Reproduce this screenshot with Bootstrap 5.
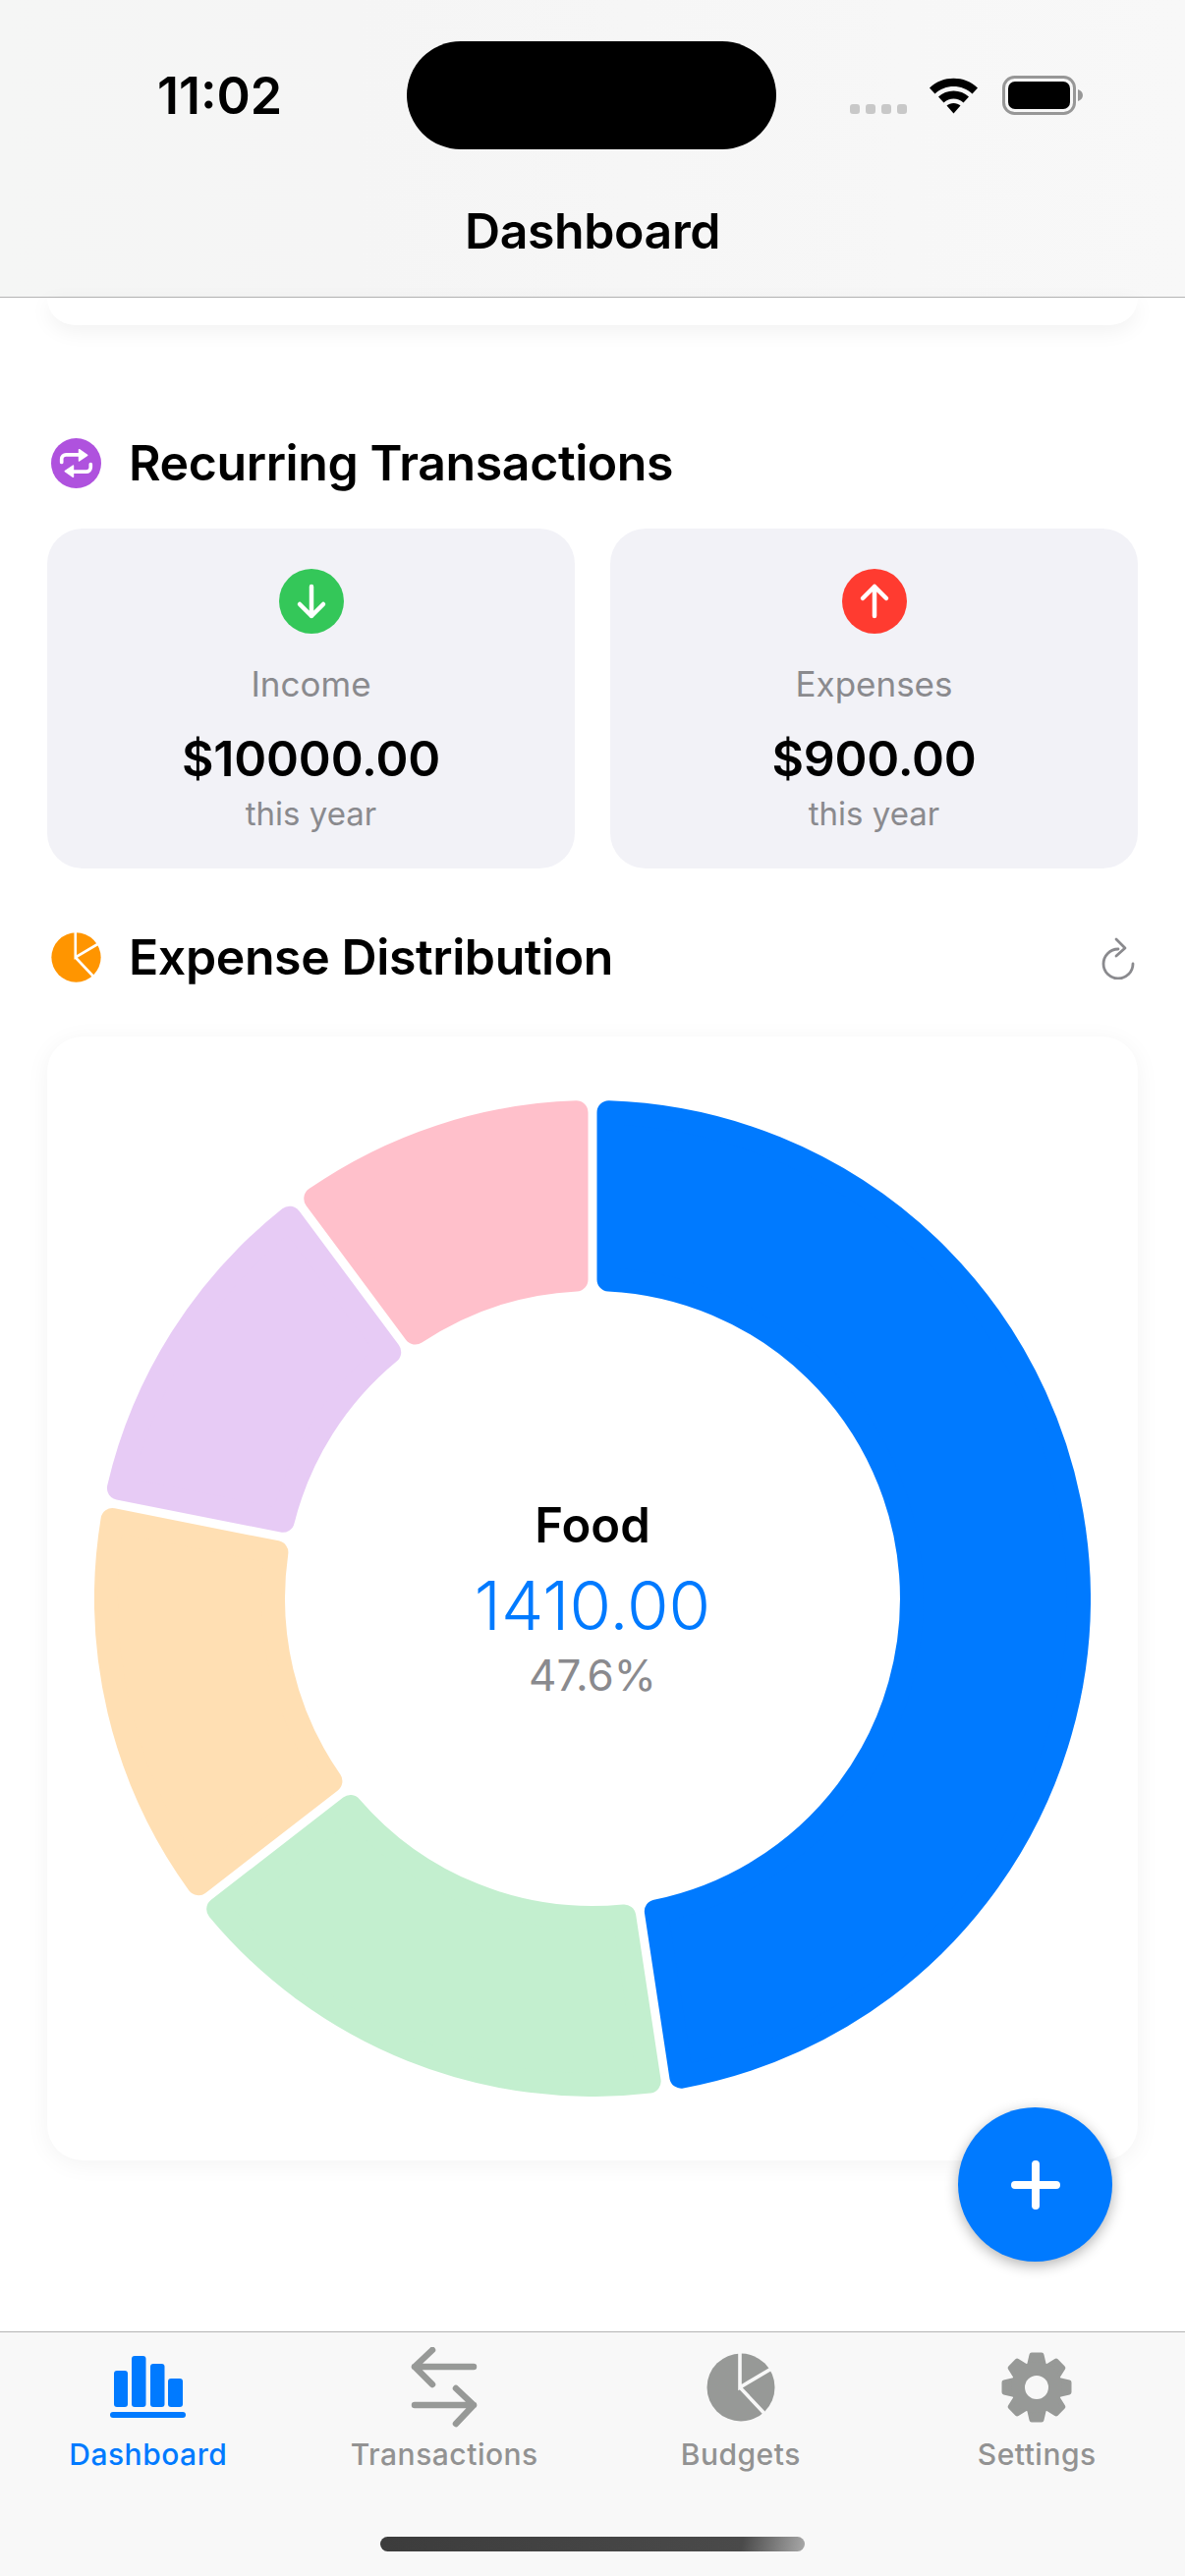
<!DOCTYPE html>
<html lang="en">
<head>
  <meta charset="UTF-8">
  <meta name="viewport" content="width=device-width, initial-scale=1.0">
  <title>Dashboard</title>
  <link href="https://cdn.jsdelivr.net/npm/bootstrap@5.3.0/dist/css/bootstrap.min.css" rel="stylesheet">
  <style>
    body {
      font-family: Inter, "Liberation Sans", sans-serif;
      background-color: #fff;
      color: #000;
    }
    .app-shell {
      width: 1206px;
      height: 2622px;
    }
    .top-bar {
      height: 303px;
      background: linear-gradient(90deg, #f5f6f5 0%, #f5f5f5 30%, #f8f8f8 100%);
      border-bottom: 1px solid #b4b4b4;
    }
    .status-row {
      padding-top: 42px;
      height: 152px;
    }
    .clock {
      width: 414px;
      padding-left: 160px;
      padding-top: 26px;
      font-size: 52px;
      line-height: 60px;
      font-weight: 600;
    }
    .island {
      width: 376px;
      height: 110px;
      background-color: #000;
      border-radius: 55px;
    }
    .status-icons {
      padding-left: 75px;
      padding-top: 36px;
    }
    .signal-dot {
      width: 10px;
      height: 10px;
      border-radius: 3px;
      background-color: #c8c8c8;
    }
    .signal-dots {
      gap: 6px;
      margin-top: 28px;
      margin-right: 22px;
    }
    .page-title {
      margin: 0;
      padding-top: 53px;
      font-size: 50px;
      line-height: 60px;
      font-weight: 600;
      letter-spacing: -.4px;
    }
    .content-area {
      padding: 0 48px;
    }
    .card-stub {
      height: 28px;
      background-color: #fff;
      border-radius: 0 0 34px 34px;
      box-shadow: 0 6px 22px rgba(0, 0, 0, .06);
    }
    .section-head {
      height: 51px;
      padding-left: 4px;
    }
    .section-one { margin-top: 115px; }
    .section-two { margin-top: 65px; }
    .section-head h2 {
      margin: 0 0 0 28px;
      font-size: 50px;
      line-height: 51px;
      font-weight: 600;
      letter-spacing: -.4px;
    }
    .refresh-icon {
      margin-right: 2px;
    }
    .tile-row {
      margin-top: 41px;
      gap: 36px;
    }
    .stat-tile {
      width: 537px;
      height: 346px;
      padding-top: 41px;
      background-color: #f2f2f7;
      border-radius: 36px;
    }
    .tile-label {
      margin-top: 30px;
      font-size: 35px;
      line-height: 42px;
      color: #8a8a8e;
    }
    .tile-amount {
      margin-top: 25px;
      font-size: 50px;
      line-height: 60px;
      font-weight: 600;
      letter-spacing: -.2px;
    }
    .tile-note {
      margin-top: 6px;
      font-size: 33px;
      line-height: 40px;
      color: #8a8a8e;
    }
    .chart-card {
      margin-top: 55px;
      height: 1144px;
      background-color: #fff;
      border-radius: 36px;
      box-shadow: 0 4px 24px rgba(0, 0, 0, .05);
    }
    .chart-label {
      padding-top: 3px;
    }
    .chart-name {
      font-size: 49px;
      line-height: 56px;
      font-weight: 600;
    }
    .chart-value {
      margin-top: 15px;
      font-size: 69px;
      line-height: 76px;
      color: #007aff;
      font-weight: 300;
    }
    .chart-share {
      margin-top: 6px;
      font-size: 44px;
      line-height: 54px;
      color: #8a8a8e;
    }
    .add-fab {
      right: 74px;
      bottom: 71px;
      width: 157px;
      height: 157px;
      background-color: #007aff;
      box-shadow: 0 4px 14px rgba(0, 0, 0, .3);
    }
    .tab-bar {
      height: 249px;
      background-color: #f8f8f8;
      border-top: 1px solid #b4b4b4;
    }
    .tab-item {
      width: 301.5px;
      color: #929292;
    }
    .tab-item.is-active {
      color: #007aff;
    }
    .tab-icon {
      height: 84px;
      margin-top: 14px;
    }
    .tab-label {
      margin-top: 4px;
      font-size: 30px;
      line-height: 44px;
      font-weight: 500;
      letter-spacing: .5px;
    }
    .home-bar {
      width: 432px;
      height: 15px;
      margin: 62px auto 0;
      border-radius: 8px;
      background: linear-gradient(100deg, #3c3c3c 0%, #4a4a4a 85%, #a8a8a8 100%);
    }
  </style>
</head>
<body>
  <svg width="0" height="0" class="position-absolute">
    <defs>
      <mask id="pie-cuts" maskUnits="userSpaceOnUse" x="0" y="0" width="70" height="70">
        <rect width="70" height="70" fill="#fff"/>
        <path d="M34 -2V35L76 10M34 35L66 69" fill="none" stroke="#000" stroke-width="3.6"/>
      </mask>
      <symbol id="pie-icon" viewBox="0 0 70 70">
        <circle cx="35" cy="35" r="34.5" fill="currentColor" mask="url(#pie-cuts)"/>
      </symbol>
    </defs>
  </svg>

  <div class="app-shell d-flex flex-column position-relative overflow-hidden">
    <header class="top-bar flex-shrink-0">
      <div class="status-row d-flex">
        <div class="clock">11:02</div>
        <div class="island"></div>
        <div class="status-icons d-flex align-items-start">
          <div class="signal-dots d-flex">
            <span class="signal-dot"></span><span class="signal-dot"></span><span class="signal-dot"></span><span class="signal-dot"></span>
          </div>
          <svg width="51" height="38" viewBox="0 0 51 38" class="me-4">
            <path d="M1 11.500C14 -1.500 37 -1.500 50 11.500L44.500 17.500C34.500 7.500 16.500 7.500 6.500 17.500Z"/>
            <path d="M10 20.500C18 12.500 33 12.500 41 20.500L35.500 26.500C30 21 21 21 15.500 26.500Z"/>
            <path d="M18.500 29.500C22 26 29 26 32.500 29.500L25.500 37.500Z"/>
          </svg>
          <svg width="83" height="40" viewBox="0 0 83 40" style="margin-top:-1px">
            <rect x="1.500" y="1.500" width="72" height="37" rx="11" fill="none" stroke="#979797" stroke-width="3"/>
            <rect x="6" y="6" width="63" height="28" rx="7"/>
            <path d="M77 14C80 15 82 17 82 20C82 23 80 25 77 26Z" fill="#979797"/>
          </svg>
        </div>
      </div>
      <h1 class="page-title text-center">Dashboard</h1>
    </header>

    <main class="content-area flex-grow-1 position-relative">
      <div class="card-stub"></div>

      <div class="section-head section-one d-flex align-items-center">
        <svg width="51" height="51" viewBox="0 0 50 50" class="flex-shrink-0">
          <circle cx="25" cy="25" r="25" fill="#af52de"/>
          <path d="M10.500 24V21C10.500 18.500 12.500 16.500 15 16.500H30" fill="none" stroke="#fff" stroke-width="3.600" stroke-linecap="round"/>
          <path d="M28 11.500L36 17L28 22.500Z" fill="#fff" stroke="#fff" stroke-width="1.500" stroke-linejoin="round"/>
          <path d="M39.500 26V29C39.500 31.500 37.500 33.500 35 33.500H20" fill="none" stroke="#fff" stroke-width="3.600" stroke-linecap="round"/>
          <path d="M22 27.500L14 33L22 38.500Z" fill="#fff" stroke="#fff" stroke-width="1.500" stroke-linejoin="round"/>
        </svg>
        <h2>Recurring Transactions</h2>
      </div>

      <div class="tile-row d-flex">
        <div class="stat-tile text-center">
          <svg width="66" height="66" viewBox="0 0 66 66" class="d-block mx-auto">
            <circle cx="33" cy="33" r="33" fill="#34c759"/>
            <path d="M33 18V48M21 36L33 48L45 36" fill="none" stroke="#fff" stroke-width="4.500" stroke-linecap="round" stroke-linejoin="round"/>
          </svg>
          <div class="tile-label">Income</div>
          <div class="tile-amount">$10000.00</div>
          <div class="tile-note">this year</div>
        </div>
        <div class="stat-tile text-center">
          <svg width="66" height="66" viewBox="0 0 66 66" class="d-block mx-auto">
            <circle cx="33" cy="33" r="33" fill="#ff3b30"/>
            <path d="M33 48V18M21 30L33 18L45 30" fill="none" stroke="#fff" stroke-width="4.500" stroke-linecap="round" stroke-linejoin="round"/>
          </svg>
          <div class="tile-label">Expenses</div>
          <div class="tile-amount">$900.00</div>
          <div class="tile-note">this year</div>
        </div>
      </div>

      <div class="section-head section-two d-flex align-items-center">
        <svg width="51" height="51" class="flex-shrink-0" style="color:#ff9500"><use href="#pie-icon"/></svg>
        <h2>Expense Distribution</h2>
        <svg width="36" height="44" viewBox="0 0 36 44" class="refresh-icon ms-auto" fill="none" stroke="#8a8a8e" stroke-width="2.800" stroke-linecap="round" stroke-linejoin="round">
          <path d="M18 13A15 15 0 1 0 33 28"/>
          <path d="M16 3L25 12L16 20"/>
        </svg>
      </div>

      <div class="chart-card d-flex align-items-center justify-content-center position-relative">
        <svg id="donut" width="1014" height="1014" viewBox="0 0 1014 1014"></svg>
        <div class="chart-label position-absolute top-50 start-50 translate-middle text-center">
          <div class="chart-name">Food</div>
          <div class="chart-value">1410.00</div>
          <div class="chart-share">47.6%</div>
        </div>
      </div>

      <button class="add-fab btn rounded-circle position-absolute d-flex align-items-center justify-content-center p-0 border-0" type="button" aria-label="Add">
        <svg width="50" height="50" viewBox="0 0 50 50">
          <path d="M25 4V46M4 25H46" fill="none" stroke="#fff" stroke-width="8" stroke-linecap="round"/>
        </svg>
      </button>
    </main>

    <nav class="tab-bar flex-shrink-0">
      <div class="d-flex">
        <div class="tab-item is-active text-center">
          <div class="tab-icon d-flex align-items-center justify-content-center">
            <svg width="77" height="64" viewBox="0 0 77 64" fill="currentColor">
              <rect x="4" y="15" width="14" height="37" rx="3"/>
              <rect x="22" y="0" width="14.500" height="52" rx="3"/>
              <rect x="41" y="8" width="14.500" height="44" rx="3"/>
              <rect x="59" y="23" width="15" height="29" rx="3"/>
              <rect x="0" y="57" width="77" height="6" rx="3"/>
            </svg>
          </div>
          <div class="tab-label">Dashboard</div>
        </div>
        <div class="tab-item text-center">
          <div class="tab-icon d-flex align-items-center justify-content-center">
            <svg width="68" height="82" viewBox="0 0 68 82" fill="none" stroke="#979997" stroke-width="6.500" stroke-linecap="round" stroke-linejoin="round">
              <path d="M64 20H4M22 3L4 20L22 38"/>
              <path d="M4 59H64M46 42L64 59L46 78"/>
            </svg>
          </div>
          <div class="tab-label">Transactions</div>
        </div>
        <div class="tab-item text-center">
          <div class="tab-icon d-flex align-items-center justify-content-center">
            <svg width="70" height="70" style="color:#979997"><use href="#pie-icon"/></svg>
          </div>
          <div class="tab-label">Budgets</div>
        </div>
        <div class="tab-item text-center">
          <div class="tab-icon d-flex align-items-center justify-content-center">
            <svg id="gear" width="72" height="72" viewBox="-36 -36 72 72"></svg>
          </div>
          <div class="tab-label">Settings</div>
        </div>
      </div>
      <div class="home-bar"></div>
    </nav>
  </div>

  <script>
    const slices = [
      { from: 0, to: 171.4, color: "#007aff" },
      { from: 171.4, to: 232.2, color: "#c3efcf" },
      { from: 232.2, to: 281.2, color: "#ffdfb3" },
      { from: 281.2, to: 323.4, color: "#e7cbf5" },
      { from: 323.4, to: 360, color: "#ffc0cb" }
    ];
    const outer = 507, inner = 313, corner = 12, halfGap = 4.5, mid = 507;

    function point(radius, deg) {
      const rad = deg * Math.PI / 180;
      return `${(mid + radius * Math.sin(rad)).toFixed(2)} ${(mid - radius * Math.cos(rad)).toFixed(2)}`;
    }

    function inset(radius) {
      return Math.asin((halfGap + corner) / radius) * 180 / Math.PI;
    }

    document.getElementById("donut").innerHTML = slices.map(s => {
      const big = outer - corner, small = inner + corner;
      const a0 = s.from + inset(big), a1 = s.to - inset(big);
      const b0 = s.from + inset(small), b1 = s.to - inset(small);
      const large = a1 - a0 > 180 ? 1 : 0;
      const largeIn = b1 - b0 > 180 ? 1 : 0;
      const d = `M${point(big, a0)}A${big} ${big} 0 ${large} 1 ${point(big, a1)}L${point(small, b1)}A${small} ${small} 0 ${largeIn} 0 ${point(small, b0)}Z`;
      return `<path d="${d}" fill="${s.color}" stroke="${s.color}" stroke-width="${corner * 2}" stroke-linejoin="round"/>`;
    }).join("");

    let teeth = "";
    for (let i = 0; i < 8; i++) {
      teeth += `<path d="M-5 -33H5L8 -20H-8Z" transform="rotate(${i * 45})" stroke="#979997" stroke-width="5" stroke-linejoin="round"/>`;
    }
    document.getElementById("gear").innerHTML =
      `<g fill="#979997">${teeth}<circle r="26"/></g><circle r="12" fill="#f8f8f8"/>`;
  </script>
  <script src="https://cdn.jsdelivr.net/npm/bootstrap@5.3.0/dist/js/bootstrap.bundle.min.js"></script>
</body>
</html>
